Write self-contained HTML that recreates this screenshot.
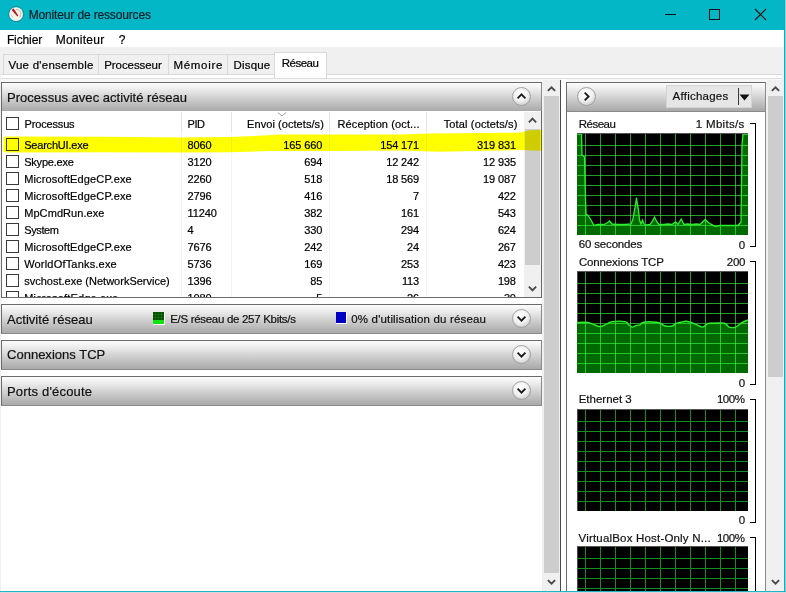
<!DOCTYPE html><html><head><meta charset="utf-8"><style>
*{margin:0;padding:0;box-sizing:border-box}
html,body{width:786px;height:593px;overflow:hidden;background:#f0f0f0;font-family:"Liberation Sans",sans-serif;color:#000}
.a{position:absolute}
.t{position:absolute;white-space:nowrap;color:#000;-webkit-text-stroke:0.2px currentColor}
.th{position:absolute;background:#cdcdcd}
</style></head><body>
<div class="a" style="left:0;top:0;width:786px;height:30px;background:#03b7c6"></div>
<svg class="a" style="left:7px;top:5px" width="19" height="19" viewBox="0 0 19 19"><circle cx="9.1" cy="9.1" r="7.6" fill="none" stroke="#2c6d76" stroke-opacity="0.55" stroke-width="1"/><circle cx="9.1" cy="9.1" r="6.9" fill="#f7f3ea"/><path d="M9.1 4.3 A4.8 4.8 0 0 1 12.8 12.2" fill="none" stroke="#bdb5a5" stroke-width="0.9"/><path d="M4.4 9.5 A4.8 4.8 0 0 0 6 12.5" fill="none" stroke="#c5bdad" stroke-width="0.8"/><polygon points="4.6,4.9 6.6,3.6 11.3,10.6 10.4,11.4" fill="#b8141c"/></svg>
<div class="t" style="left:28.70px;top:8px;font-size:12px;line-height:14px;letter-spacing:-0.147px;color:#0b1d26;">Moniteur de ressources</div>
<div class="a" style="left:665px;top:14px;width:11px;height:1px;background:#111"></div>
<div class="a" style="left:709px;top:9px;width:11px;height:11px;border:1px solid #111"></div>
<svg class="a" style="left:754px;top:8px" width="13" height="13" viewBox="0 0 13 13"><path d="M1 1L12 12M12 1L1 12" stroke="#111" stroke-width="1.1"/></svg>
<div class="a" style="left:0;top:30px;width:784px;height:17px;background:#fff"></div>
<div class="t" style="left:6.90px;top:33px;font-size:12px;line-height:14px;letter-spacing:-0.118px;color:#000;">Fichier</div>
<div class="t" style="left:55.70px;top:33px;font-size:12px;line-height:14px;letter-spacing:0.259px;color:#000;">Moniteur</div>
<div class="t" style="left:118.70px;top:33px;font-size:12px;line-height:14px;letter-spacing:0.000px;color:#000;">?</div>
<div class="a" style="left:3px;top:54px;width:96px;height:21px;border:1px solid #d9d9d9;border-bottom:none;background:#f0f0f0"></div>
<div class="t" style="left:8.40px;top:58px;font-size:11.5px;line-height:14px;letter-spacing:0.255px;color:#000;">Vue d'ensemble</div>
<div class="a" style="left:98px;top:54px;width:71px;height:21px;border:1px solid #d9d9d9;border-bottom:none;background:#f0f0f0"></div>
<div class="t" style="left:104.20px;top:58px;font-size:11.5px;line-height:14px;letter-spacing:-0.063px;color:#000;">Processeur</div>
<div class="a" style="left:168px;top:54px;width:60px;height:21px;border:1px solid #d9d9d9;border-bottom:none;background:#f0f0f0"></div>
<div class="t" style="left:173.40px;top:58px;font-size:11.5px;line-height:14px;letter-spacing:0.711px;color:#000;">Mémoire</div>
<div class="a" style="left:227px;top:54px;width:48px;height:21px;border:1px solid #d9d9d9;border-bottom:none;background:#f0f0f0"></div>
<div class="t" style="left:233.60px;top:58px;font-size:11.5px;line-height:14px;letter-spacing:0.161px;color:#000;">Disque</div>
<div class="a" style="left:1px;top:74px;width:781px;height:1px;background:#d9d9d9"></div>
<div class="a" style="left:1px;top:75px;width:781px;height:3px;background:#fff"></div>
<div class="a" style="left:1px;top:78px;width:781px;height:1px;background:#dcdcdc"></div>
<div class="a" style="left:1px;top:79px;width:781px;height:3px;background:#f8f8f8"></div>
<div class="a" style="left:274px;top:52px;width:53px;height:26px;border:1px solid #d9d9d9;border-bottom:none;background:#fff"></div>
<div class="t" style="left:281.70px;top:56px;font-size:11.5px;line-height:14px;letter-spacing:-0.488px;color:#000;">Réseau</div>
<div class="a" style="left:1px;top:82px;width:541px;height:509px;background:#fff"></div>
<div class="a" style="left:1px;top:82px;width:541px;height:30px;border:1px solid #6a6a6a;border-bottom-color:#8a8a8a;border-right-color:#8a8a8a;background:linear-gradient(#fdfdfd 0%,#eeeeee 20%,#cfcfcf 55%,#a9a9a9 100%)"></div>
<div class="t" style="left:7.00px;top:90px;font-size:13px;line-height:16px;letter-spacing:0.028px;color:#111;">Processus avec activité réseau</div>
<svg class="a" style="left:511px;top:86px" width="21" height="21" viewBox="0 0 21 21"><defs><radialGradient id="g82" cx="45%" cy="35%" r="65%"><stop offset="0" stop-color="#fff"/><stop offset="0.6" stop-color="#f1f1f1"/><stop offset="1" stop-color="#cfcfcf"/></radialGradient></defs><circle cx="10.5" cy="10.5" r="9" fill="url(#g82)" stroke="#9a9a9a" stroke-width="0.9"/><path d="M6.6 12.3 L10.5 8.4 L14.4 12.3" fill="none" stroke="#1a1a1a" stroke-width="1.9"/></svg>
<div class="a" style="left:1px;top:111px;width:541px;height:187px;border:1px solid #6a6a6a;border-top:none;background:#fff;overflow:hidden"></div>
<div class="a" style="left:2px;top:112px;width:539px;height:185px;overflow:hidden">
<div class="a" style="left:4px;top:5px;width:13px;height:13px;border:1px solid #3a3a3a"></div>
<div class="a" style="left:179px;top:0;width:1px;height:20px;background:#e3e3e3"></div>
<div class="a" style="left:179px;top:20px;width:1px;height:170px;background:#f1f4f8"></div>
<div class="a" style="left:229px;top:0;width:1px;height:20px;background:#e3e3e3"></div>
<div class="a" style="left:229px;top:20px;width:1px;height:170px;background:#f1f4f8"></div>
<div class="a" style="left:327px;top:0;width:1px;height:20px;background:#e3e3e3"></div>
<div class="a" style="left:327px;top:20px;width:1px;height:170px;background:#f1f4f8"></div>
<div class="a" style="left:424px;top:0;width:1px;height:20px;background:#e3e3e3"></div>
<div class="a" style="left:424px;top:20px;width:1px;height:170px;background:#f1f4f8"></div>
<div class="t" style="left:22.60px;top:6px;font-size:11px;line-height:13px;letter-spacing:-0.169px;color:#000;">Processus</div>
<div class="t" style="left:185.50px;top:6px;font-size:11px;line-height:13px;letter-spacing:-0.418px;color:#000;">PID</div>
<div class="t" style="left:245.10px;top:6px;font-size:11px;line-height:13px;letter-spacing:0.060px;color:#000;">Envoi (octets/s)</div>
<div class="t" style="left:335.50px;top:6px;font-size:11px;line-height:13px;letter-spacing:0.119px;color:#000;">Réception (oct...</div>
<div class="t" style="left:441.70px;top:6px;font-size:11px;line-height:13px;letter-spacing:0.145px;color:#000;">Total (octets/s)</div>
<svg class="a" style="left:275px;top:0px" width="10" height="6"><path d="M1 0.5L5 4L9 0.5" fill="none" stroke="#9a9a9a" stroke-width="1"/></svg>
<div class="a" style="left:4px;top:26px;width:13px;height:13px;border:1px solid #3a3a3a"></div>
<div class="t" style="left:22.20px;top:27px;font-size:11px;line-height:13px;letter-spacing:-0.204px;color:#000;">SearchUI.exe</div>
<div class="t" style="left:185.50px;top:27px;font-size:11px;line-height:13px;letter-spacing:-0.120px;color:#000;">8060</div>
<div class="t" style="left:281.36px;top:27px;font-size:11px;line-height:13px;letter-spacing:-0.120px;color:#000;">165 660</div>
<div class="t" style="left:378.16px;top:27px;font-size:11px;line-height:13px;letter-spacing:-0.120px;color:#000;">154 171</div>
<div class="t" style="left:474.96px;top:27px;font-size:11px;line-height:13px;letter-spacing:-0.120px;color:#000;">319 831</div>
<div class="a" style="left:4px;top:43px;width:13px;height:13px;border:1px solid #3a3a3a"></div>
<div class="t" style="left:22.20px;top:44px;font-size:11px;line-height:13px;letter-spacing:-0.208px;color:#000;">Skype.exe</div>
<div class="t" style="left:185.50px;top:44px;font-size:11px;line-height:13px;letter-spacing:-0.120px;color:#000;">3120</div>
<div class="t" style="left:302.29px;top:44px;font-size:11px;line-height:13px;letter-spacing:-0.120px;color:#000;">694</div>
<div class="t" style="left:384.16px;top:44px;font-size:11px;line-height:13px;letter-spacing:-0.120px;color:#000;">12 242</div>
<div class="t" style="left:480.96px;top:44px;font-size:11px;line-height:13px;letter-spacing:-0.120px;color:#000;">12 935</div>
<div class="a" style="left:4px;top:60px;width:13px;height:13px;border:1px solid #3a3a3a"></div>
<div class="t" style="left:22.20px;top:61px;font-size:11px;line-height:13px;letter-spacing:0.141px;color:#000;">MicrosoftEdgeCP.exe</div>
<div class="t" style="left:185.50px;top:61px;font-size:11px;line-height:13px;letter-spacing:-0.120px;color:#000;">2260</div>
<div class="t" style="left:302.29px;top:61px;font-size:11px;line-height:13px;letter-spacing:-0.120px;color:#000;">518</div>
<div class="t" style="left:384.16px;top:61px;font-size:11px;line-height:13px;letter-spacing:-0.120px;color:#000;">18 569</div>
<div class="t" style="left:480.96px;top:61px;font-size:11px;line-height:13px;letter-spacing:-0.120px;color:#000;">19 087</div>
<div class="a" style="left:4px;top:77px;width:13px;height:13px;border:1px solid #3a3a3a"></div>
<div class="t" style="left:22.20px;top:78px;font-size:11px;line-height:13px;letter-spacing:0.141px;color:#000;">MicrosoftEdgeCP.exe</div>
<div class="t" style="left:185.50px;top:78px;font-size:11px;line-height:13px;letter-spacing:-0.120px;color:#000;">2796</div>
<div class="t" style="left:302.29px;top:78px;font-size:11px;line-height:13px;letter-spacing:-0.120px;color:#000;">416</div>
<div class="t" style="left:411.08px;top:78px;font-size:11px;line-height:13px;letter-spacing:-0.120px;color:#000;">7</div>
<div class="t" style="left:495.89px;top:78px;font-size:11px;line-height:13px;letter-spacing:-0.120px;color:#000;">422</div>
<div class="a" style="left:4px;top:94px;width:13px;height:13px;border:1px solid #3a3a3a"></div>
<div class="t" style="left:22.20px;top:95px;font-size:11px;line-height:13px;letter-spacing:0.075px;color:#000;">MpCmdRun.exe</div>
<div class="t" style="left:185.50px;top:95px;font-size:11px;line-height:13px;letter-spacing:-0.120px;color:#000;">11240</div>
<div class="t" style="left:302.29px;top:95px;font-size:11px;line-height:13px;letter-spacing:-0.120px;color:#000;">382</div>
<div class="t" style="left:399.09px;top:95px;font-size:11px;line-height:13px;letter-spacing:-0.120px;color:#000;">161</div>
<div class="t" style="left:495.89px;top:95px;font-size:11px;line-height:13px;letter-spacing:-0.120px;color:#000;">543</div>
<div class="a" style="left:4px;top:111px;width:13px;height:13px;border:1px solid #3a3a3a"></div>
<div class="t" style="left:22.20px;top:112px;font-size:11px;line-height:13px;letter-spacing:-0.375px;color:#000;">System</div>
<div class="t" style="left:185.50px;top:112px;font-size:11px;line-height:13px;letter-spacing:-0.120px;color:#000;">4</div>
<div class="t" style="left:302.29px;top:112px;font-size:11px;line-height:13px;letter-spacing:-0.120px;color:#000;">330</div>
<div class="t" style="left:399.09px;top:112px;font-size:11px;line-height:13px;letter-spacing:-0.120px;color:#000;">294</div>
<div class="t" style="left:495.89px;top:112px;font-size:11px;line-height:13px;letter-spacing:-0.120px;color:#000;">624</div>
<div class="a" style="left:4px;top:128px;width:13px;height:13px;border:1px solid #3a3a3a"></div>
<div class="t" style="left:22.20px;top:129px;font-size:11px;line-height:13px;letter-spacing:0.141px;color:#000;">MicrosoftEdgeCP.exe</div>
<div class="t" style="left:185.50px;top:129px;font-size:11px;line-height:13px;letter-spacing:-0.120px;color:#000;">7676</div>
<div class="t" style="left:302.29px;top:129px;font-size:11px;line-height:13px;letter-spacing:-0.120px;color:#000;">242</div>
<div class="t" style="left:405.08px;top:129px;font-size:11px;line-height:13px;letter-spacing:-0.120px;color:#000;">24</div>
<div class="t" style="left:495.89px;top:129px;font-size:11px;line-height:13px;letter-spacing:-0.120px;color:#000;">267</div>
<div class="a" style="left:4px;top:145px;width:13px;height:13px;border:1px solid #3a3a3a"></div>
<div class="t" style="left:22.20px;top:146px;font-size:11px;line-height:13px;letter-spacing:0.189px;color:#000;">WorldOfTanks.exe</div>
<div class="t" style="left:185.50px;top:146px;font-size:11px;line-height:13px;letter-spacing:-0.120px;color:#000;">5736</div>
<div class="t" style="left:302.29px;top:146px;font-size:11px;line-height:13px;letter-spacing:-0.120px;color:#000;">169</div>
<div class="t" style="left:399.09px;top:146px;font-size:11px;line-height:13px;letter-spacing:-0.120px;color:#000;">253</div>
<div class="t" style="left:495.89px;top:146px;font-size:11px;line-height:13px;letter-spacing:-0.120px;color:#000;">423</div>
<div class="a" style="left:4px;top:162px;width:13px;height:13px;border:1px solid #3a3a3a"></div>
<div class="t" style="left:22.20px;top:163px;font-size:11px;line-height:13px;letter-spacing:0.004px;color:#000;">svchost.exe (NetworkService)</div>
<div class="t" style="left:185.50px;top:163px;font-size:11px;line-height:13px;letter-spacing:-0.120px;color:#000;">1396</div>
<div class="t" style="left:308.28px;top:163px;font-size:11px;line-height:13px;letter-spacing:-0.120px;color:#000;">85</div>
<div class="t" style="left:399.90px;top:163px;font-size:11px;line-height:13px;letter-spacing:-0.120px;color:#000;">113</div>
<div class="t" style="left:495.89px;top:163px;font-size:11px;line-height:13px;letter-spacing:-0.120px;color:#000;">198</div>
<div class="a" style="left:4px;top:179px;width:13px;height:13px;border:1px solid #3a3a3a"></div>
<div class="t" style="left:22.20px;top:180px;font-size:11px;line-height:13px;letter-spacing:0.181px;color:#000;">MicrosoftEdge.exe</div>
<div class="t" style="left:185.50px;top:180px;font-size:11px;line-height:13px;letter-spacing:-0.120px;color:#000;">1080</div>
<div class="t" style="left:314.28px;top:180px;font-size:11px;line-height:13px;letter-spacing:-0.120px;color:#000;">5</div>
<div class="t" style="left:405.08px;top:180px;font-size:11px;line-height:13px;letter-spacing:-0.120px;color:#000;">26</div>
<div class="t" style="left:501.88px;top:180px;font-size:11px;line-height:13px;letter-spacing:-0.120px;color:#000;">30</div>
<div class="a" style="left:522px;top:0;width:17px;height:185px;background:#f0f0f0"></div>
<div class="th" style="left:523px;top:17px;width:15px;height:136px"></div>
<svg class="a" style="left:522px;top:0" width="17" height="17"><path d="M4.9 10.3L8.5 6.7L12.1 10.3" fill="none" stroke="#4a4a4a" stroke-width="1.9"/></svg>
<svg class="a" style="left:522px;top:168px" width="17" height="17"><path d="M4.9 6.7L8.5 10.3L12.1 6.7" fill="none" stroke="#4a4a4a" stroke-width="1.9"/></svg>
</div>
<div class="a" style="left:1px;top:304px;width:541px;height:30px;border:1px solid #6a6a6a;border-bottom-color:#8a8a8a;border-right-color:#8a8a8a;background:linear-gradient(#fdfdfd 0%,#eeeeee 20%,#cfcfcf 55%,#a9a9a9 100%)"></div>
<div class="t" style="left:7.00px;top:312px;font-size:13px;line-height:16px;letter-spacing:0.038px;color:#111;">Activité réseau</div>
<svg class="a" style="left:511px;top:308px" width="21" height="21" viewBox="0 0 21 21"><defs><radialGradient id="g304" cx="45%" cy="35%" r="65%"><stop offset="0" stop-color="#fff"/><stop offset="0.6" stop-color="#f1f1f1"/><stop offset="1" stop-color="#cfcfcf"/></radialGradient></defs><circle cx="10.5" cy="10.5" r="9" fill="url(#g304)" stroke="#9a9a9a" stroke-width="0.9"/><path d="M6.6 8.7 L10.5 12.6 L14.4 8.7" fill="none" stroke="#1a1a1a" stroke-width="1.9"/></svg>
<svg class="a" style="left:153px;top:312px" width="12" height="13"><rect x="0" y="0" width="12" height="13" fill="#fff"/><rect x="0" y="0" width="11" height="8" fill="#064a06"/><rect x="0" y="8" width="11" height="4" fill="#11e011"/><path d="M0 2.5H11M0 5.5H11M2.5 0V8M5.5 0V8M8.5 0V8" stroke="#0f7a0f" stroke-width="0.7"/></svg>
<div class="t" style="left:170.20px;top:312px;font-size:11.5px;line-height:14px;letter-spacing:-0.303px;color:#111;">E/S réseau de 257 Kbits/s</div>
<div class="a" style="left:336px;top:312px;width:11px;height:12px;background:#0000c4;border-right:1px solid #fff;border-bottom:1px solid #fff"></div>
<div class="t" style="left:351.30px;top:312px;font-size:11.5px;line-height:14px;letter-spacing:0.156px;color:#111;">0% d'utilisation du réseau</div>
<div class="a" style="left:1px;top:340px;width:541px;height:30px;border:1px solid #6a6a6a;border-bottom-color:#8a8a8a;border-right-color:#8a8a8a;background:linear-gradient(#fdfdfd 0%,#eeeeee 20%,#cfcfcf 55%,#a9a9a9 100%)"></div>
<div class="t" style="left:7.00px;top:347px;font-size:13px;line-height:16px;letter-spacing:0.013px;color:#111;">Connexions TCP</div>
<svg class="a" style="left:511px;top:344px" width="21" height="21" viewBox="0 0 21 21"><defs><radialGradient id="g340" cx="45%" cy="35%" r="65%"><stop offset="0" stop-color="#fff"/><stop offset="0.6" stop-color="#f1f1f1"/><stop offset="1" stop-color="#cfcfcf"/></radialGradient></defs><circle cx="10.5" cy="10.5" r="9" fill="url(#g340)" stroke="#9a9a9a" stroke-width="0.9"/><path d="M6.6 8.7 L10.5 12.6 L14.4 8.7" fill="none" stroke="#1a1a1a" stroke-width="1.9"/></svg>
<div class="a" style="left:1px;top:376px;width:541px;height:30px;border:1px solid #6a6a6a;border-bottom-color:#8a8a8a;border-right-color:#8a8a8a;background:linear-gradient(#fdfdfd 0%,#eeeeee 20%,#cfcfcf 55%,#a9a9a9 100%)"></div>
<div class="t" style="left:7.00px;top:384px;font-size:13px;line-height:16px;letter-spacing:0.177px;color:#111;">Ports d'écoute</div>
<svg class="a" style="left:511px;top:380px" width="21" height="21" viewBox="0 0 21 21"><defs><radialGradient id="g376" cx="45%" cy="35%" r="65%"><stop offset="0" stop-color="#fff"/><stop offset="0.6" stop-color="#f1f1f1"/><stop offset="1" stop-color="#cfcfcf"/></radialGradient></defs><circle cx="10.5" cy="10.5" r="9" fill="url(#g376)" stroke="#9a9a9a" stroke-width="0.9"/><path d="M6.6 8.7 L10.5 12.6 L14.4 8.7" fill="none" stroke="#1a1a1a" stroke-width="1.9"/></svg>
<div class="a" style="left:543px;top:80px;width:17px;height:511px;background:#f0f0f0"></div>
<div class="th" style="left:544px;top:96px;width:15px;height:477px"></div>
<svg class="a" style="left:543px;top:81px" width="17" height="16"><path d="M4.9 9.9L8.5 6.3L12.1 9.9" fill="none" stroke="#4a4a4a" stroke-width="1.9"/></svg>
<svg class="a" style="left:543px;top:574px" width="17" height="16"><path d="M4.9 6.1L8.5 9.7L12.1 6.1" fill="none" stroke="#4a4a4a" stroke-width="1.9"/></svg>
<div class="a" style="left:561px;top:79px;width:5px;height:512px;background:#fff"></div>
<div class="a" style="left:560px;top:80px;width:1px;height:511px;background:#4a4a4a"></div>
<div class="a" style="left:566px;top:82px;width:200px;height:509px;background:#fff;border-left:1px solid #6a6a6a;border-right:1px solid #8a8a8a"></div>
<div class="a" style="left:566px;top:82px;width:200px;height:30px;border:1px solid #6a6a6a;border-bottom-color:#8a8a8a;border-right-color:#8a8a8a;background:linear-gradient(#fdfdfd 0%,#eeeeee 20%,#cfcfcf 55%,#a9a9a9 100%)"></div>
<svg class="a" style="left:576px;top:86px" width="21" height="21" viewBox="0 0 21 21"><defs><radialGradient id="gr" cx="45%" cy="35%" r="65%"><stop offset="0" stop-color="#fff"/><stop offset="0.6" stop-color="#f1f1f1"/><stop offset="1" stop-color="#cfcfcf"/></radialGradient></defs><circle cx="10.5" cy="10.5" r="9" fill="url(#gr)" stroke="#9a9a9a" stroke-width="0.9"/><path d="M8.7 6.6 L12.6 10.5 L8.7 14.4" fill="none" stroke="#1a1a1a" stroke-width="1.9"/></svg>
<div class="a" style="left:666px;top:85px;width:86px;height:23px;background:#e6e6e6;border:1px solid #d4d4d4"></div>
<div class="t" style="left:672.60px;top:89px;font-size:11.5px;line-height:14px;letter-spacing:0.234px;color:#111;">Affichages</div>
<div class="a" style="left:738px;top:88px;width:1px;height:17px;background:#3a3a3a"></div>
<svg class="a" style="left:739px;top:94px" width="11" height="7"><path d="M0.5 0.5L10.5 0.5L5.5 6.5Z" fill="#111"/></svg>
<div class="a" style="left:767px;top:80px;width:17px;height:511px;background:#f0f0f0"></div>
<div class="th" style="left:768px;top:96px;width:15px;height:281px"></div>
<svg class="a" style="left:767px;top:81px" width="17" height="16"><path d="M4.9 9.9L8.5 6.3L12.1 9.9" fill="none" stroke="#4a4a4a" stroke-width="1.9"/></svg>
<svg class="a" style="left:767px;top:574px" width="17" height="16"><path d="M4.9 6.1L8.5 9.7L12.1 6.1" fill="none" stroke="#4a4a4a" stroke-width="1.9"/></svg>
<div class="t" style="left:578.80px;top:117px;font-size:11.5px;line-height:14px;letter-spacing:-0.528px;color:#111;">Réseau</div>
<div class="t" style="left:695.80px;top:117px;font-size:11.5px;line-height:14px;letter-spacing:0.311px;color:#111;">1 Mbits/s</div>
<svg class="a" style="left:577px;top:133px" width="171" height="102" viewBox="0 133 171 102"><rect x="0" y="133" width="171" height="102" fill="#000"/><rect x="0" y="133" width="1" height="102" fill="#4a4a4a"/><polygon points="0,235 0.0,134.0 4.5,134.0 5.0,155.0 7.5,157.0 8.0,182.0 9.0,214.0 11.0,215.5 14.0,220.0 17.0,225.5 21.0,224.5 27.0,224.5 30.0,223.0 32.5,221.0 35.0,224.0 41.0,224.5 48.0,224.5 54.0,224.0 56.0,219.0 57.5,210.0 58.8,203.0 59.5,197.7 60.2,203.0 61.5,210.0 62.5,220.0 64.0,224.0 65.5,220.0 67.0,224.0 70.0,225.0 73.0,224.5 75.0,222.0 77.5,217.2 80.0,222.0 82.0,224.5 87.0,224.5 91.0,224.0 95.0,224.5 98.5,221.8 101.0,224.5 104.2,219.0 107.0,224.5 110.5,224.0 115.0,224.5 119.6,224.0 123.0,224.5 128.2,219.5 132.0,223.0 138.0,226.4 143.0,225.5 161.0,225.5 164.0,222.0 165.0,145.0 166.0,134.0 171.0,134.0 171,235" fill="#006a00"/><line x1="8.5" y1="134" x2="8.5" y2="235" stroke="#3cff3c" stroke-opacity="0.62" stroke-width="1"/><line x1="23.5" y1="134" x2="23.5" y2="235" stroke="#3cff3c" stroke-opacity="0.62" stroke-width="1"/><line x1="38.5" y1="134" x2="38.5" y2="235" stroke="#3cff3c" stroke-opacity="0.62" stroke-width="1"/><line x1="53.5" y1="134" x2="53.5" y2="235" stroke="#3cff3c" stroke-opacity="0.62" stroke-width="1"/><line x1="68.5" y1="134" x2="68.5" y2="235" stroke="#3cff3c" stroke-opacity="0.62" stroke-width="1"/><line x1="83.5" y1="134" x2="83.5" y2="235" stroke="#3cff3c" stroke-opacity="0.62" stroke-width="1"/><line x1="98.5" y1="134" x2="98.5" y2="235" stroke="#3cff3c" stroke-opacity="0.62" stroke-width="1"/><line x1="113.5" y1="134" x2="113.5" y2="235" stroke="#3cff3c" stroke-opacity="0.62" stroke-width="1"/><line x1="128.5" y1="134" x2="128.5" y2="235" stroke="#3cff3c" stroke-opacity="0.62" stroke-width="1"/><line x1="143.5" y1="134" x2="143.5" y2="235" stroke="#3cff3c" stroke-opacity="0.62" stroke-width="1"/><line x1="158.5" y1="134" x2="158.5" y2="235" stroke="#3cff3c" stroke-opacity="0.62" stroke-width="1"/><line x1="173.5" y1="134" x2="173.5" y2="235" stroke="#3cff3c" stroke-opacity="0.62" stroke-width="1"/><line x1="0" y1="145.5" x2="171" y2="145.5" stroke="#3cff3c" stroke-opacity="0.62" stroke-width="1"/><line x1="0" y1="155.5" x2="171" y2="155.5" stroke="#3cff3c" stroke-opacity="0.62" stroke-width="1"/><line x1="0" y1="165.5" x2="171" y2="165.5" stroke="#3cff3c" stroke-opacity="0.62" stroke-width="1"/><line x1="0" y1="175.5" x2="171" y2="175.5" stroke="#3cff3c" stroke-opacity="0.62" stroke-width="1"/><line x1="0" y1="185.5" x2="171" y2="185.5" stroke="#3cff3c" stroke-opacity="0.62" stroke-width="1"/><line x1="0" y1="195.5" x2="171" y2="195.5" stroke="#3cff3c" stroke-opacity="0.62" stroke-width="1"/><line x1="0" y1="205.5" x2="171" y2="205.5" stroke="#3cff3c" stroke-opacity="0.62" stroke-width="1"/><line x1="0" y1="215.5" x2="171" y2="215.5" stroke="#3cff3c" stroke-opacity="0.62" stroke-width="1"/><line x1="0" y1="225.5" x2="171" y2="225.5" stroke="#3cff3c" stroke-opacity="0.62" stroke-width="1"/><polyline points="0.0,134.0 4.5,134.0 5.0,155.0 7.5,157.0 8.0,182.0 9.0,214.0 11.0,215.5 14.0,220.0 17.0,225.5 21.0,224.5 27.0,224.5 30.0,223.0 32.5,221.0 35.0,224.0 41.0,224.5 48.0,224.5 54.0,224.0 56.0,219.0 57.5,210.0 58.8,203.0 59.5,197.7 60.2,203.0 61.5,210.0 62.5,220.0 64.0,224.0 65.5,220.0 67.0,224.0 70.0,225.0 73.0,224.5 75.0,222.0 77.5,217.2 80.0,222.0 82.0,224.5 87.0,224.5 91.0,224.0 95.0,224.5 98.5,221.8 101.0,224.5 104.2,219.0 107.0,224.5 110.5,224.0 115.0,224.5 119.6,224.0 123.0,224.5 128.2,219.5 132.0,223.0 138.0,226.4 143.0,225.5 161.0,225.5 164.0,222.0 165.0,145.0 166.0,134.0 171.0,134.0" fill="none" stroke="#2df02d" stroke-width="1.3"/><rect x="0" y="133" width="171" height="1" fill="#555"/></svg>
<div class="t" style="left:578.80px;top:237px;font-size:11.5px;line-height:14px;letter-spacing:-0.172px;color:#111;">60 secondes</div>
<div class="t" style="left:738.80px;top:238px;font-size:11.5px;line-height:14px;letter-spacing:-0.500px;color:#111;">0</div>
<div class="a" style="left:750px;top:123px;width:6px;height:1px;background:#000"></div>
<div class="a" style="left:755px;top:123px;width:1px;height:124px;background:#000"></div>
<div class="a" style="left:750px;top:246px;width:6px;height:1px;background:#000"></div>
<div class="t" style="left:578.90px;top:255px;font-size:11.5px;line-height:14px;letter-spacing:-0.132px;color:#111;">Connexions TCP</div>
<div class="t" style="left:726.81px;top:255px;font-size:11.5px;line-height:14px;letter-spacing:-0.250px;color:#111;">200</div>
<svg class="a" style="left:577px;top:271px" width="171" height="102" viewBox="0 271 171 102"><rect x="0" y="271" width="171" height="102" fill="#000"/><rect x="0" y="271" width="1" height="102" fill="#4a4a4a"/><path d="M0.00,322.40 C1.83,322.40 8.38,322.10 11.00,322.40 C13.62,322.70 14.03,323.55 15.70,324.20 C17.37,324.85 19.52,325.95 21.00,326.30 C22.48,326.65 23.12,326.70 24.60,326.30 C26.08,325.90 28.13,324.68 29.90,323.90 C31.67,323.12 32.15,321.98 35.20,321.60 C38.25,321.22 45.45,321.07 48.20,321.60 C50.95,322.13 50.52,323.88 51.70,324.80 C52.88,325.72 54.02,327.00 55.30,327.10 C56.58,327.20 58.12,325.78 59.40,325.40 C60.68,325.02 61.82,325.33 63.00,324.80 C64.18,324.27 63.75,322.63 66.50,322.20 C69.25,321.77 76.45,321.90 79.50,322.20 C82.55,322.50 83.38,323.37 84.80,324.00 C86.22,324.63 86.23,325.67 88.00,326.00 C89.77,326.33 93.67,326.40 95.40,326.00 C97.13,325.60 97.02,324.23 98.40,323.60 C99.78,322.97 101.93,322.60 103.70,322.20 C105.47,321.80 107.33,321.20 109.00,321.20 C110.67,321.20 112.13,321.70 113.70,322.20 C115.27,322.70 116.43,323.38 118.40,324.20 C120.37,325.02 123.53,327.13 125.50,327.10 C127.47,327.07 129.02,324.63 130.20,324.00 C131.38,323.37 129.73,323.42 132.60,323.30 C135.47,323.18 144.15,322.67 147.40,323.30 C150.65,323.93 150.23,326.47 152.10,327.10 C153.97,327.73 156.53,327.82 158.60,327.10 C160.67,326.38 162.43,323.98 164.50,322.80 C166.57,321.62 169.92,320.47 171.00,320.00 L171,373 L0,373 Z" fill="#006a00"/><line x1="8.5" y1="272" x2="8.5" y2="373" stroke="#3cff3c" stroke-opacity="0.62" stroke-width="1"/><line x1="23.5" y1="272" x2="23.5" y2="373" stroke="#3cff3c" stroke-opacity="0.62" stroke-width="1"/><line x1="38.5" y1="272" x2="38.5" y2="373" stroke="#3cff3c" stroke-opacity="0.62" stroke-width="1"/><line x1="53.5" y1="272" x2="53.5" y2="373" stroke="#3cff3c" stroke-opacity="0.62" stroke-width="1"/><line x1="68.5" y1="272" x2="68.5" y2="373" stroke="#3cff3c" stroke-opacity="0.62" stroke-width="1"/><line x1="83.5" y1="272" x2="83.5" y2="373" stroke="#3cff3c" stroke-opacity="0.62" stroke-width="1"/><line x1="98.5" y1="272" x2="98.5" y2="373" stroke="#3cff3c" stroke-opacity="0.62" stroke-width="1"/><line x1="113.5" y1="272" x2="113.5" y2="373" stroke="#3cff3c" stroke-opacity="0.62" stroke-width="1"/><line x1="128.5" y1="272" x2="128.5" y2="373" stroke="#3cff3c" stroke-opacity="0.62" stroke-width="1"/><line x1="143.5" y1="272" x2="143.5" y2="373" stroke="#3cff3c" stroke-opacity="0.62" stroke-width="1"/><line x1="158.5" y1="272" x2="158.5" y2="373" stroke="#3cff3c" stroke-opacity="0.62" stroke-width="1"/><line x1="173.5" y1="272" x2="173.5" y2="373" stroke="#3cff3c" stroke-opacity="0.62" stroke-width="1"/><line x1="0" y1="283.5" x2="171" y2="283.5" stroke="#3cff3c" stroke-opacity="0.62" stroke-width="1"/><line x1="0" y1="293.5" x2="171" y2="293.5" stroke="#3cff3c" stroke-opacity="0.62" stroke-width="1"/><line x1="0" y1="303.5" x2="171" y2="303.5" stroke="#3cff3c" stroke-opacity="0.62" stroke-width="1"/><line x1="0" y1="313.5" x2="171" y2="313.5" stroke="#3cff3c" stroke-opacity="0.62" stroke-width="1"/><line x1="0" y1="323.5" x2="171" y2="323.5" stroke="#3cff3c" stroke-opacity="0.62" stroke-width="1"/><line x1="0" y1="333.5" x2="171" y2="333.5" stroke="#3cff3c" stroke-opacity="0.62" stroke-width="1"/><line x1="0" y1="343.5" x2="171" y2="343.5" stroke="#3cff3c" stroke-opacity="0.62" stroke-width="1"/><line x1="0" y1="353.5" x2="171" y2="353.5" stroke="#3cff3c" stroke-opacity="0.62" stroke-width="1"/><line x1="0" y1="363.5" x2="171" y2="363.5" stroke="#3cff3c" stroke-opacity="0.62" stroke-width="1"/><path d="M0.00,322.40 C1.83,322.40 8.38,322.10 11.00,322.40 C13.62,322.70 14.03,323.55 15.70,324.20 C17.37,324.85 19.52,325.95 21.00,326.30 C22.48,326.65 23.12,326.70 24.60,326.30 C26.08,325.90 28.13,324.68 29.90,323.90 C31.67,323.12 32.15,321.98 35.20,321.60 C38.25,321.22 45.45,321.07 48.20,321.60 C50.95,322.13 50.52,323.88 51.70,324.80 C52.88,325.72 54.02,327.00 55.30,327.10 C56.58,327.20 58.12,325.78 59.40,325.40 C60.68,325.02 61.82,325.33 63.00,324.80 C64.18,324.27 63.75,322.63 66.50,322.20 C69.25,321.77 76.45,321.90 79.50,322.20 C82.55,322.50 83.38,323.37 84.80,324.00 C86.22,324.63 86.23,325.67 88.00,326.00 C89.77,326.33 93.67,326.40 95.40,326.00 C97.13,325.60 97.02,324.23 98.40,323.60 C99.78,322.97 101.93,322.60 103.70,322.20 C105.47,321.80 107.33,321.20 109.00,321.20 C110.67,321.20 112.13,321.70 113.70,322.20 C115.27,322.70 116.43,323.38 118.40,324.20 C120.37,325.02 123.53,327.13 125.50,327.10 C127.47,327.07 129.02,324.63 130.20,324.00 C131.38,323.37 129.73,323.42 132.60,323.30 C135.47,323.18 144.15,322.67 147.40,323.30 C150.65,323.93 150.23,326.47 152.10,327.10 C153.97,327.73 156.53,327.82 158.60,327.10 C160.67,326.38 162.43,323.98 164.50,322.80 C166.57,321.62 169.92,320.47 171.00,320.00" fill="none" stroke="#2df02d" stroke-width="1.4"/><rect x="0" y="271" width="171" height="1" fill="#555"/></svg>
<div class="t" style="left:738.80px;top:376px;font-size:11.5px;line-height:14px;letter-spacing:0.000px;color:#111;">0</div>
<div class="a" style="left:750px;top:261px;width:6px;height:1px;background:#000"></div>
<div class="a" style="left:755px;top:261px;width:1px;height:124px;background:#000"></div>
<div class="a" style="left:750px;top:384px;width:6px;height:1px;background:#000"></div>
<div class="t" style="left:578.70px;top:392px;font-size:11.5px;line-height:14px;letter-spacing:-0.007px;color:#111;">Ethernet 3</div>
<div class="t" style="left:716.90px;top:392px;font-size:11.5px;line-height:14px;letter-spacing:-0.471px;color:#111;">100%</div>
<svg class="a" style="left:577px;top:409px" width="171" height="102" viewBox="0 409 171 102"><rect x="0" y="409" width="171" height="102" fill="#000"/><rect x="0" y="409" width="1" height="102" fill="#4a4a4a"/><line x1="8.5" y1="410" x2="8.5" y2="511" stroke="#148c24" stroke-opacity="1" stroke-width="1"/><line x1="23.5" y1="410" x2="23.5" y2="511" stroke="#148c24" stroke-opacity="1" stroke-width="1"/><line x1="38.5" y1="410" x2="38.5" y2="511" stroke="#148c24" stroke-opacity="1" stroke-width="1"/><line x1="53.5" y1="410" x2="53.5" y2="511" stroke="#148c24" stroke-opacity="1" stroke-width="1"/><line x1="68.5" y1="410" x2="68.5" y2="511" stroke="#148c24" stroke-opacity="1" stroke-width="1"/><line x1="83.5" y1="410" x2="83.5" y2="511" stroke="#148c24" stroke-opacity="1" stroke-width="1"/><line x1="98.5" y1="410" x2="98.5" y2="511" stroke="#148c24" stroke-opacity="1" stroke-width="1"/><line x1="113.5" y1="410" x2="113.5" y2="511" stroke="#148c24" stroke-opacity="1" stroke-width="1"/><line x1="128.5" y1="410" x2="128.5" y2="511" stroke="#148c24" stroke-opacity="1" stroke-width="1"/><line x1="143.5" y1="410" x2="143.5" y2="511" stroke="#148c24" stroke-opacity="1" stroke-width="1"/><line x1="158.5" y1="410" x2="158.5" y2="511" stroke="#148c24" stroke-opacity="1" stroke-width="1"/><line x1="173.5" y1="410" x2="173.5" y2="511" stroke="#148c24" stroke-opacity="1" stroke-width="1"/><line x1="0" y1="421.5" x2="171" y2="421.5" stroke="#148c24" stroke-opacity="1" stroke-width="1"/><line x1="0" y1="431.5" x2="171" y2="431.5" stroke="#148c24" stroke-opacity="1" stroke-width="1"/><line x1="0" y1="441.5" x2="171" y2="441.5" stroke="#148c24" stroke-opacity="1" stroke-width="1"/><line x1="0" y1="451.5" x2="171" y2="451.5" stroke="#148c24" stroke-opacity="1" stroke-width="1"/><line x1="0" y1="461.5" x2="171" y2="461.5" stroke="#148c24" stroke-opacity="1" stroke-width="1"/><line x1="0" y1="471.5" x2="171" y2="471.5" stroke="#148c24" stroke-opacity="1" stroke-width="1"/><line x1="0" y1="481.5" x2="171" y2="481.5" stroke="#148c24" stroke-opacity="1" stroke-width="1"/><line x1="0" y1="491.5" x2="171" y2="491.5" stroke="#148c24" stroke-opacity="1" stroke-width="1"/><line x1="0" y1="501.5" x2="171" y2="501.5" stroke="#148c24" stroke-opacity="1" stroke-width="1"/><rect x="0" y="409" width="171" height="1" fill="#555"/></svg>
<div class="t" style="left:738.80px;top:513px;font-size:11.5px;line-height:14px;letter-spacing:0.000px;color:#111;">0</div>
<div class="a" style="left:750px;top:399px;width:6px;height:1px;background:#000"></div>
<div class="a" style="left:755px;top:399px;width:1px;height:124px;background:#000"></div>
<div class="a" style="left:750px;top:522px;width:6px;height:1px;background:#000"></div>
<div class="t" style="left:578.60px;top:531px;font-size:11.5px;line-height:14px;letter-spacing:0.183px;color:#111;">VirtualBox Host-Only N...</div>
<div class="t" style="left:716.90px;top:531px;font-size:11.5px;line-height:14px;letter-spacing:-0.471px;color:#111;">100%</div>
<svg class="a" style="left:577px;top:546px" width="171" height="61" viewBox="0 546 171 61"><rect x="0" y="546" width="171" height="61" fill="#000"/><rect x="0" y="546" width="1" height="61" fill="#4a4a4a"/><line x1="8.5" y1="547" x2="8.5" y2="607" stroke="#148c24" stroke-opacity="1" stroke-width="1"/><line x1="23.5" y1="547" x2="23.5" y2="607" stroke="#148c24" stroke-opacity="1" stroke-width="1"/><line x1="38.5" y1="547" x2="38.5" y2="607" stroke="#148c24" stroke-opacity="1" stroke-width="1"/><line x1="53.5" y1="547" x2="53.5" y2="607" stroke="#148c24" stroke-opacity="1" stroke-width="1"/><line x1="68.5" y1="547" x2="68.5" y2="607" stroke="#148c24" stroke-opacity="1" stroke-width="1"/><line x1="83.5" y1="547" x2="83.5" y2="607" stroke="#148c24" stroke-opacity="1" stroke-width="1"/><line x1="98.5" y1="547" x2="98.5" y2="607" stroke="#148c24" stroke-opacity="1" stroke-width="1"/><line x1="113.5" y1="547" x2="113.5" y2="607" stroke="#148c24" stroke-opacity="1" stroke-width="1"/><line x1="128.5" y1="547" x2="128.5" y2="607" stroke="#148c24" stroke-opacity="1" stroke-width="1"/><line x1="143.5" y1="547" x2="143.5" y2="607" stroke="#148c24" stroke-opacity="1" stroke-width="1"/><line x1="158.5" y1="547" x2="158.5" y2="607" stroke="#148c24" stroke-opacity="1" stroke-width="1"/><line x1="173.5" y1="547" x2="173.5" y2="607" stroke="#148c24" stroke-opacity="1" stroke-width="1"/><line x1="0" y1="558.5" x2="171" y2="558.5" stroke="#148c24" stroke-opacity="1" stroke-width="1"/><line x1="0" y1="568.5" x2="171" y2="568.5" stroke="#148c24" stroke-opacity="1" stroke-width="1"/><line x1="0" y1="578.5" x2="171" y2="578.5" stroke="#148c24" stroke-opacity="1" stroke-width="1"/><line x1="0" y1="588.5" x2="171" y2="588.5" stroke="#148c24" stroke-opacity="1" stroke-width="1"/><line x1="0" y1="598.5" x2="171" y2="598.5" stroke="#148c24" stroke-opacity="1" stroke-width="1"/><rect x="0" y="546" width="171" height="1" fill="#555"/></svg>
<div class="a" style="left:750px;top:537px;width:6px;height:1px;background:#000"></div>
<div class="a" style="left:755px;top:537px;width:1px;height:64px;background:#000"></div>
<div class="a" style="left:750px;top:600px;width:6px;height:1px;background:#000"></div>
<div class="a" style="left:784px;top:0;width:1px;height:593px;background:#12aebb"></div>
<div class="a" style="left:785px;top:0;width:1px;height:593px;background:#7ed6de"></div>
<div class="a" style="left:0;top:591px;width:786px;height:1px;background:#22b4c2"></div>
<div class="a" style="left:0;top:592px;width:786px;height:1px;background:#d9d7de"></div>
<svg class="a" style="left:0;top:120px;mix-blend-mode:multiply" width="545" height="40"><polygon points="3.5,17.2 6.0,16.6 100.0,16.8 180.0,17.4 230.0,17.0 255.0,16.0 280.0,14.6 330.0,14.4 400.0,14.5 430.0,13.6 520.0,12.7 528.0,10.5 541.5,9.8 541.5,30.8 520.0,30.0 440.0,31.8 400.0,30.5 330.0,31.0 270.0,30.9 230.0,32.3 180.0,32.6 100.0,32.3 6.0,32.4 3.5,31.5" fill="#ffff00"/></svg>
</body></html>
